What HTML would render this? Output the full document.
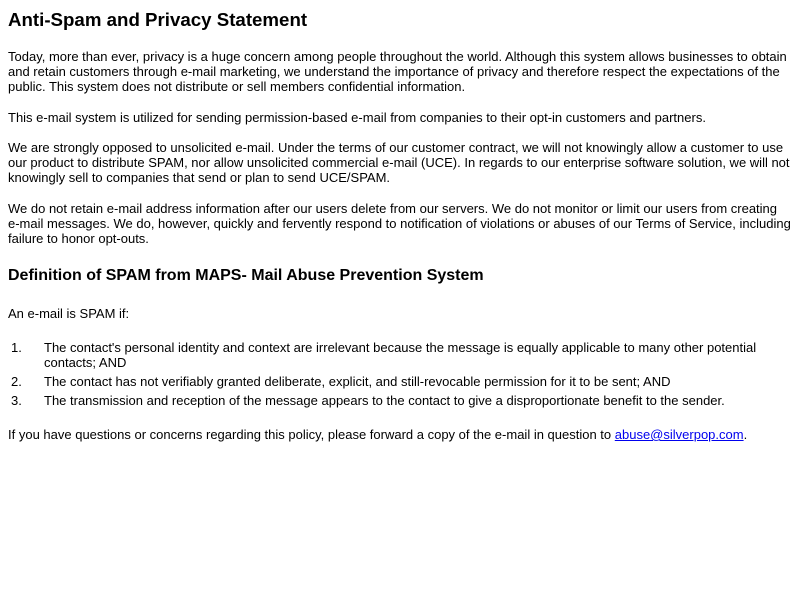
<!DOCTYPE html>
<html><head><meta charset="utf-8">
<style>
html,body{margin:0;padding:0;background:#fff;width:800px;height:600px;overflow:hidden}
body{font-family:"Liberation Sans",Arial,sans-serif;font-size:13px;color:#000;position:relative}
.b{position:absolute;left:8px;right:8px;line-height:15px;margin:0}
h1.b{font-size:18.7px;line-height:22px;font-weight:bold}
h2.b{font-size:16px;line-height:19px;font-weight:bold}
.n{position:absolute;left:11px;line-height:15px}
.t{position:absolute;left:44px;right:36px;line-height:15px}
a{color:#00e;text-decoration:underline}
</style></head><body>
<h1 class="b" style="top:9px">Anti-Spam and Privacy Statement</h1>
<p class="b" style="top:49px">Today, more than ever, privacy is a huge concern among people throughout the world. Although this system allows businesses to obtain and retain customers through e-mail marketing, we understand the importance of privacy and therefore respect the expectations of the public. This system does not distribute or sell members confidential information.</p>
<p class="b" style="top:110px">This e-mail system is utilized for sending permission-based e-mail from companies to their opt-in customers and partners.</p>
<p class="b" style="top:140px">We are strongly opposed to unsolicited e-mail. Under the terms of our customer contract, we will not knowingly allow a customer to use our product to distribute SPAM, nor allow unsolicited commercial e-mail (UCE). In regards to our enterprise software solution, we will not knowingly sell to companies that send or plan to send UCE/SPAM.</p>
<p class="b" style="top:201px">We do not retain e-mail address information after our users delete from our servers. We do not monitor or limit our users from creating e-mail messages. We do, however, quickly and fervently respond to notification of violations or abuses of our Terms of Service, including failure to honor opt-outs.</p>
<h2 class="b" style="top:266px">Definition of SPAM from MAPS- Mail Abuse Prevention System</h2>
<p class="b" style="top:306px">An e-mail is SPAM if:</p>
<div class="n" style="top:340px">1.</div><div class="t" style="top:340px">The contact's personal identity and context are irrelevant because the message is equally applicable to many other potential contacts; AND</div>
<div class="n" style="top:374px">2.</div><div class="t" style="top:374px">The contact has not verifiably granted deliberate, explicit, and still-revocable permission for it to be sent; AND</div>
<div class="n" style="top:393px">3.</div><div class="t" style="top:393px">The transmission and reception of the message appears to the contact to give a disproportionate benefit to the sender.</div>
<p class="b" style="top:427px">If you have questions or concerns regarding this policy, please forward a copy of the e-mail in question to <a>abuse@silverpop.com</a>.</p>
</body></html>
